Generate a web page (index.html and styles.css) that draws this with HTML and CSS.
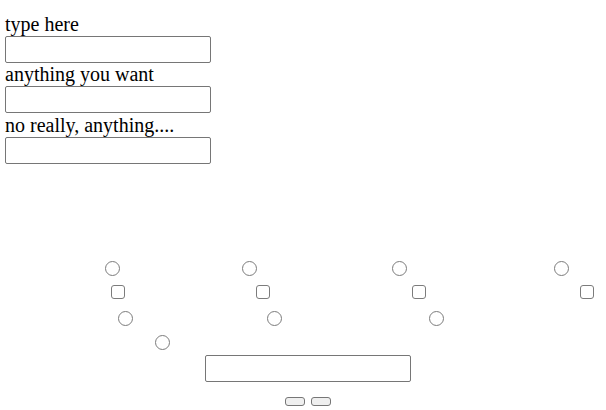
FILE: index.html
```html
<!DOCTYPE html>
<html>
<head>
<meta charset="utf-8">
<link rel="stylesheet" href="styles.css">
</head>
<body>
<div class="form">
  <label class="lbl">type here</label>
  <input class="field" type="text">
  <label class="lbl">anything you want</label>
  <input class="field" type="text">
  <label class="lbl lbl-last">no really, anything....</label>
  <input class="field" type="text">
</div>
<div class="scatter">
  <div class="row row1">
    <input class="radio" type="radio" name="a">
    <input class="radio" type="radio" name="b">
    <input class="radio" type="radio" name="c">
    <input class="radio" type="radio" name="d">
  </div>
  <div class="row row2">
    <input class="check" type="checkbox">
    <input class="check" type="checkbox">
    <input class="check" type="checkbox">
    <input class="check" type="checkbox">
  </div>
  <div class="row row3">
    <input class="radio" type="radio" name="e">
    <input class="radio" type="radio" name="f">
    <input class="radio" type="radio" name="g">
  </div>
  <div class="row row4">
    <input class="radio" type="radio" name="h">
  </div>
  <div class="row row5">
    <input class="field" type="text">
  </div>
  <div class="row row6">
    <button class="btn" type="button"></button>
    <button class="btn" type="button"></button>
  </div>
</div>
</body>
</html>
```
FILE: styles.css
```css
html, body {
  margin: 0;
  padding: 0;
  background: #fff;
}
body {
  font-family: "Liberation Serif", "Times New Roman", serif;
  font-size: 20px;
  color: #000;
}
.form {
  display: flex;
  flex-direction: column;
  align-items: flex-start;
  padding: 13px 0 0 5px;
}
.lbl {
  display: block;
  line-height: 23px;
  height: 23px;
}
.lbl-last {
  height: 24px;
  line-height: 24px;
}
.field {
  box-sizing: border-box;
  width: 206px;
  height: 27px;
  margin: 0;
  padding: 1px 2px;
  border: 1px solid #767676;
  border-radius: 2px;
  background: #fff;
  font-size: 13px;
}
.scatter {
  display: flex;
  flex-direction: column;
  margin-top: 96px;
}
.row {
  display: flex;
  align-items: flex-start;
}
.radio {
  appearance: none;
  -webkit-appearance: none;
  box-sizing: border-box;
  width: 15px;
  height: 15px;
  margin: 0;
  border: 1px solid #7c7c7c;
  border-radius: 50%;
  background: #fff;
  flex: none;
}
.check {
  appearance: none;
  -webkit-appearance: none;
  box-sizing: border-box;
  width: 14px;
  height: 14px;
  margin: 0;
  border: 1px solid #7c7c7c;
  border-radius: 3px;
  background: #fff;
  flex: none;
}
.row1 { padding: 1px 0 0 105px; height: 24px; }
.row1 .radio:nth-child(2) { margin-left: 122px; }
.row1 .radio:nth-child(3) { margin-left: 135px; }
.row1 .radio:nth-child(4) { margin-left: 147px; }
.row2 { padding-left: 111px; height: 26px; }
.row2 .check:nth-child(2) { margin-left: 131px; }
.row2 .check:nth-child(3) { margin-left: 142px; }
.row2 .check:nth-child(4) { margin-left: 154px; }
.row3 { padding-left: 118px; height: 24px; }
.row3 .radio:nth-child(2) { margin-left: 134px; }
.row3 .radio:nth-child(3) { margin-left: 147px; }
.row4 { padding-left: 155px; height: 20px; }
.row5 { padding-left: 205px; height: 42px; }
.row6 { padding-left: 285px; gap: 6px; }
.btn {
  box-sizing: border-box;
  width: 20px;
  height: 9px;
  margin: 0;
  padding: 0;
  border: 1px solid #767676;
  border-radius: 3px;
  background: #efefef;
}
```
